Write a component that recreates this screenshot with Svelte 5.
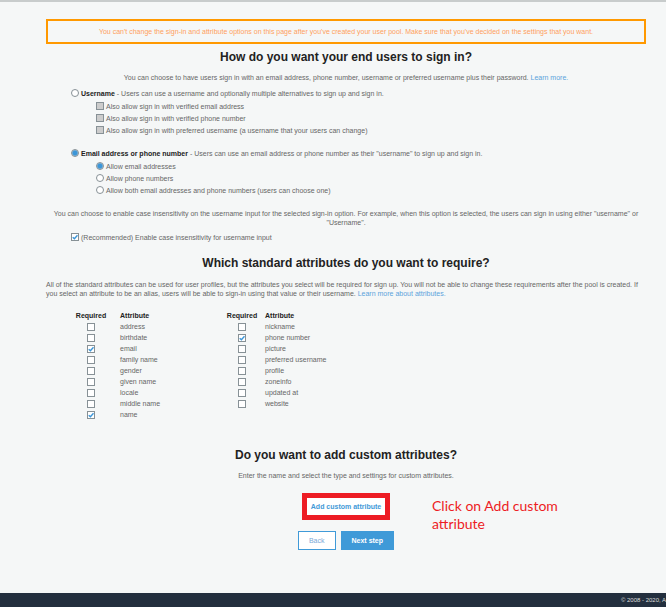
<script>
  let method = $state('email');
  let contact = $state('emails');
  let caseInsensitive = $state(true);

  const aliases = [
    'Also allow sign in with verified email address',
    'Also allow sign in with verified phone number',
    'Also allow sign in with preferred username (a username that your users can change)'
  ];
  const contacts = [
    { id: 'emails', label: 'Allow email addresses' },
    { id: 'phones', label: 'Allow phone numbers' },
    { id: 'both', label: 'Allow both email addresses and phone numbers (users can choose one)' }
  ];
  let columns = $state([
    ['address', 'birthdate', 'email', 'family name', 'gender', 'given name', 'locale', 'middle name', 'name'],
    ['nickname', 'phone number', 'picture', 'preferred username', 'profile', 'zoneinfo', 'updated at', 'website']
  ].map((names) => names.map((name) => ({ name, required: ['email', 'name', 'phone number'].includes(name) }))));
</script>

<div class="page">
  <main>
    <p class="warning">You can't change the sign-in and attribute options on this page after you've created your user pool. Make sure that you've decided on the settings that you want.</p>

    <section class="signin">
      <h2>How do you want your end users to sign in?</h2>
      <p class="center">You can choose to have users sign in with an email address, phone number, username or preferred username plus their password. <a href="#signin">Learn more.</a></p>

      <div class="group first">
        <label><input type="radio" name="method" value="username" bind:group={method} /><span><b>Username</b> - Users can use a username and optionally multiple alternatives to sign up and sign in.</span></label>
        <div class="nested">
          {#each aliases as alias}
            <label><input type="checkbox" disabled={method !== 'username'} /><span>{alias}</span></label>
          {/each}
        </div>
      </div>

      <div class="group second">
        <label><input type="radio" name="method" value="email" bind:group={method} /><span><b>Email address or phone number</b> - Users can use an email address or phone number as their "username" to sign up and sign in.</span></label>
        <div class="nested">
          {#each contacts as item}
            <label><input type="radio" name="contact" value={item.id} bind:group={contact} /><span>{item.label}</span></label>
          {/each}
        </div>
      </div>

      <p class="center case">You can choose to enable case insensitivity on the username input for the selected sign-in option. For example, when this option is selected, the users can sign in using either "username" or "Username".</p>
      <div class="group">
        <label><input type="checkbox" bind:checked={caseInsensitive} /><span>(Recommended) Enable case insensitivity for username input</span></label>
      </div>
    </section>

    <section class="standard">
      <h2>Which standard attributes do you want to require?</h2>
      <p>All of the standard attributes can be used for user profiles, but the attributes you select will be required for sign up. You will not be able to change these requirements after the pool is created. If you select an attribute to be an alias, users will be able to sign-in using that value or their username. <a href="#attributes">Learn more about attributes.</a></p>
      <div class="tables">
        {#each columns as rows, c}
          <table>
            <thead><tr><th>Required</th><th>Attribute</th></tr></thead>
            <tbody>
              {#each rows as row, r}
                <tr>
                  <td><input id="attr-{c}-{r}" type="checkbox" bind:checked={row.required} /></td>
                  <td><label for="attr-{c}-{r}">{row.name}</label></td>
                </tr>
              {/each}
            </tbody>
          </table>
        {/each}
      </div>
    </section>

    <section class="custom">
      <h2>Do you want to add custom attributes?</h2>
      <p class="center">Enter the name and select the type and settings for custom attributes.</p>
      <div class="add">
        <button class="highlight">Add custom attribute</button>
        <p class="note">Click on Add custom attribute</p>
      </div>
      <div class="actions">
        <button class="back">Back</button>
        <button class="next">Next step</button>
      </div>
    </section>
  </main>
  <footer>© 2008 - 2020, A</footer>
</div>

<style>
  :global(body) {
    margin: 0;
    background: #f5f7f7;
  }
  .page {
    display: flex;
    flex-direction: column;
    box-sizing: border-box;
    min-height: 100vh;
    border-top: 2px solid #c8cccc;
    color: #666;
    font: 7px/9px "Liberation Sans", Arial, sans-serif;
  }
  main {
    padding: 17px 20px 32px 46px;
  }
  p, h2 {
    margin: 0;
  }
  a {
    color: #5ba3dc;
    text-decoration: none;
  }
  .warning {
    padding: 6px;
    border: 2px solid #ff9900;
    color: #ff9f60;
    line-height: 9px;
    text-align: center;
  }
  h2 {
    color: #222;
    font-size: 12px;
    line-height: 16px;
    text-align: center;
  }
  section > p {
    padding-right: 8px;
  }
  .center {
    padding: 0 4px;
    text-align: center;
  }
  .signin h2 + p,
  .custom h2 + p {
    margin-top: 8px;
  }
  .signin {
    padding-top: 5px;
  }
  .group {
    padding-left: 25px;
  }
  .first {
    padding-top: 5px;
  }
  .second {
    padding-top: 11px;
  }
  .group label {
    display: flex;
    align-items: center;
    gap: 2px;
    height: 12px;
  }
  .nested {
    padding: 1px 0 0 25px;
  }
  b, th {
    color: #222;
    font-weight: 700;
  }
  input {
    appearance: none;
    flex: none;
    box-sizing: border-box;
    width: 8px;
    height: 8px;
    margin: 0;
    border: 1px solid #879196;
    background: #fff;
  }
  input[type="radio"] {
    border-radius: 50%;
  }
  input[type="radio"]:checked {
    background: radial-gradient(circle, #3c96d8 0 2px, #8fc1e6 3px, #fff 4px);
  }
  input[type="checkbox"]:disabled {
    background: #ccc;
  }
  input[type="checkbox"]:checked {
    background: #fff url("data:image/svg+xml,%3Csvg xmlns='http://www.w3.org/2000/svg' viewBox='0 0 6 6'%3E%3Cpath d='M.7 3.2 2.4 4.7 5.5 1.3' fill='none' stroke='%233c96d8' stroke-width='1.4'/%3E%3C/svg%3E") center / 6px 6px no-repeat;
  }
  .case {
    padding-top: 13px;
    padding-bottom: 4px;
  }
  .standard {
    padding-top: 12px;
  }
  .standard h2 + p {
    margin-top: 9px;
  }
  .tables {
    display: flex;
    align-items: flex-start;
    gap: 33px;
    padding: 13px 0 0 26px;
  }
  table {
    border-collapse: collapse;
  }
  th, td {
    height: 11px;
    padding: 0;
    line-height: 10px;
    text-align: left;
    white-space: nowrap;
  }
  th {
    height: 10px;
  }
  th:first-child, td:first-child {
    width: 38px;
    padding-right: 10px;
    text-align: center;
  }
  table + table th:first-child,
  table + table td:first-child {
    padding-right: 4px;
  }
  td input {
    display: block;
    margin: 0 auto;
  }
  th:last-child {
    width: 70px;
  }
  .custom {
    padding-top: 27px;
  }
  button {
    box-sizing: border-box;
    border: 1px solid #3f9ad8;
    font: inherit;
    white-space: nowrap;
    cursor: pointer;
  }
  .add {
    position: relative;
    display: flex;
    justify-content: center;
    padding-top: 13px;
  }
  .highlight {
    height: 27px;
    padding: 0 4px;
    border: 5px solid #ed1c24;
    background: #fff;
    color: #3f9ad8;
    font-weight: 700;
  }
  .note {
    position: absolute;
    top: 17px;
    left: 386px;
    width: 140px;
    color: #ed1c24;
    font: 14px/18px Lato, sans-serif;
  }
  .actions {
    display: flex;
    justify-content: center;
    gap: 5px;
    padding-top: 11px;
  }
  .actions button {
    height: 19px;
    padding: 0 10px;
  }
  .back {
    background: #fff;
    color: #7aa9d8;
  }
  .next {
    background: #3f9ad8;
    color: #fff;
    font-weight: 700;
  }
  footer {
    box-sizing: border-box;
    height: 14px;
    margin-top: auto;
    background: #232f3e;
    color: #ddd;
    font-size: 6px;
    line-height: 14px;
    text-align: right;
  }
</style>
